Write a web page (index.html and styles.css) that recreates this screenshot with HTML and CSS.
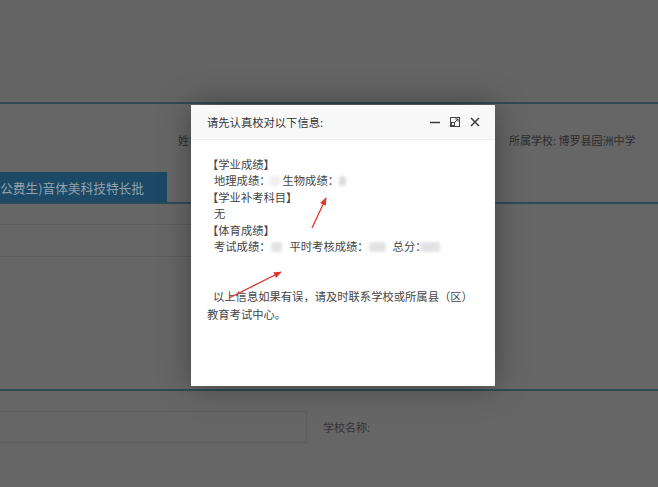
FILE: index.html
```html
<!DOCTYPE html>
<html lang="zh-CN">
<head>
<meta charset="utf-8">
<title>信息校对</title>
<link rel="stylesheet" href="styles.css">
</head>
<body>
<div class="page">
  <div class="top"></div>
  <div class="rule"></div>
  <div class="info">
    <span class="name">姓名：</span>
    <span class="school">所属学校: 博罗县园洲中学</span>
  </div>
  <div class="tabs">
    <div class="tab"><span>(公费生)音体美科技特长批</span></div>
  </div>
  <div class="row r1"></div>
  <div class="row r2"></div>
  <div class="spacer"></div>
  <div class="rule"></div>
  <div class="form">
    <div class="input"></div>
    <span class="flabel">学校名称:</span>
  </div>
</div>

<div class="modal">
  <div class="mtitle">
    <span class="ttext">请先认真校对以下信息:</span>
    <div class="tools">
      <svg class="ico" viewBox="0 0 12 12" width="12" height="12"><path d="M1 6.5H11" stroke="#333" stroke-width="1.4"/></svg>
      <svg class="ico" viewBox="0 0 12 12" width="12" height="12"><rect x="1.5" y="1.5" width="9" height="9" fill="none" stroke="#444" stroke-width="1"/><rect x="2.5" y="6.5" width="3" height="3" fill="none" stroke="#444" stroke-width="1"/><path d="M5.5 6.5L9 3M6.3 3H9V5.7" fill="none" stroke="#444" stroke-width="1"/></svg>
      <svg class="ico" viewBox="0 0 12 12" width="12" height="12"><path d="M2 2L10 10M10 2L2 10" stroke="#333" stroke-width="1.4"/></svg>
    </div>
  </div>
  <div class="mbody">
    <div class="block">
      <div>【学业成绩】</div>
      <div class="ind">地理成绩：<span class="blur b1"></span>生物成绩：<span class="blur b2"></span></div>
      <div>【学业补考科目】</div>
      <div class="ind">无</div>
      <div>【体育成绩】</div>
      <div class="ind">考试成绩：<span class="blur b3"></span>平时考核成绩：<span class="blur b4"></span>总分：<span class="blur b5"></span></div>
    </div>
    <p class="note"><span class="ind2">以上信息如果有误，请及时联系学校或所属县（区）</span>教育考试中心。</p>
  </div>
</div>

<svg class="arrows" width="658" height="487" viewBox="0 0 658 487">
  <defs>
    <marker id="ah" viewBox="0 0 10 10" refX="9" refY="5" markerWidth="6" markerHeight="6" orient="auto">
      <path d="M0 1L10 5L0 9Z" fill="#e2342b"/>
    </marker>
  </defs>
  <path d="M312 228L326 198" stroke="#e2342b" stroke-width="1.3" marker-end="url(#ah)"/>
  <path d="M229 298L281 272" stroke="#e2342b" stroke-width="1.3" marker-end="url(#ah)"/>
</svg>
</body>
</html>
```

FILE: styles.css
```css
* { box-sizing: border-box; }
html, body {
  margin: 0;
  padding: 0;
}
body {
  width: 658px;
  height: 487px;
  overflow: hidden;
  background: #666666;
  font-family: "Noto Sans CJK SC", "Liberation Sans", sans-serif;
  color: #2b2b2b;
  position: relative;
}
.page {
  display: flex;
  flex-direction: column;
}
.top {
  height: 102px;
  background: #646464;
}
.rule {
  height: 2px;
  background: #2f4a55;
}
.info {
  height: 68px;
  display: flex;
  align-items: flex-start;
  padding-top: 28px;
  padding-left: 178px;
  font-size: 11px;
  line-height: 17px;
}
.name { width: 331px; }
.tabs {
  height: 32px;
  border-bottom: 2px solid #2c4b5c;
  display: flex;
}
.tab {
  width: 167px;
  height: 30px;
  background: #1b4966;
  color: #93a2ac;
  font-size: 12.7px;
  display: flex;
  align-items: center;
  justify-content: flex-end;
  padding-right: 23px;
  overflow: hidden;
  white-space: nowrap;
}
.row {
  width: 300px;
  border-bottom: 1px solid #5c5c5c;
}
.r1 { height: 21px; }
.r2 { height: 32px; }
.spacer { height: 132px; }
.form {
  display: flex;
  align-items: center;
  margin-top: 20px;
  height: 32px;
}
.input {
  width: 308px;
  height: 32px;
  margin-left: -1px;
  border: 1px solid #5d5d5d;
}
.flabel {
  margin-left: 16px;
  font-size: 11px;
  color: #333;
}

.modal {
  position: absolute;
  left: 191px;
  top: 105px;
  width: 304px;
  height: 281px;
  background: #fff;
  box-shadow: 0 0 30px rgba(0, 0, 0, 0.35);
}
.mtitle {
  height: 35px;
  background: #f8f8f8;
  border-bottom: 1px solid #eeeeee;
  display: flex;
  align-items: center;
  justify-content: space-between;
  padding: 0 14px 0 16px;
  font-size: 11.3px;
  color: #333;
}
.tools {
  display: flex;
  gap: 8px;
  align-items: center;
}
.ico { display: block; }
.mbody {
  padding: 16px 16px 0 16px;
  font-size: 11.3px;
  color: #444;
}
.block { line-height: 16.4px; }
.ind { padding-left: 7px; white-space: nowrap; }
.blur {
  display: inline-block;
  height: 10px;
  vertical-align: -1px;
  background: #e3e3e3;
  border-radius: 3px;
  filter: blur(1.5px);
}
.b1 { width: 10px; margin: 0 3px 0 -1px; background: #eeeeee; }
.b2 { width: 7px; background: #dcdcdc; }
.b3 { width: 11px; margin: 0 8px 0 0; }
.b4 { width: 17px; margin: 0 7px 0 0; }
.b5 { width: 20px; margin-left: -7px; }
.note {
  margin: 34px 0 0 0;
  line-height: 17.3px;
}
.ind2 { padding-left: 6px; }
.arrows {
  position: absolute;
  left: 0;
  top: 0;
  pointer-events: none;
}
```
